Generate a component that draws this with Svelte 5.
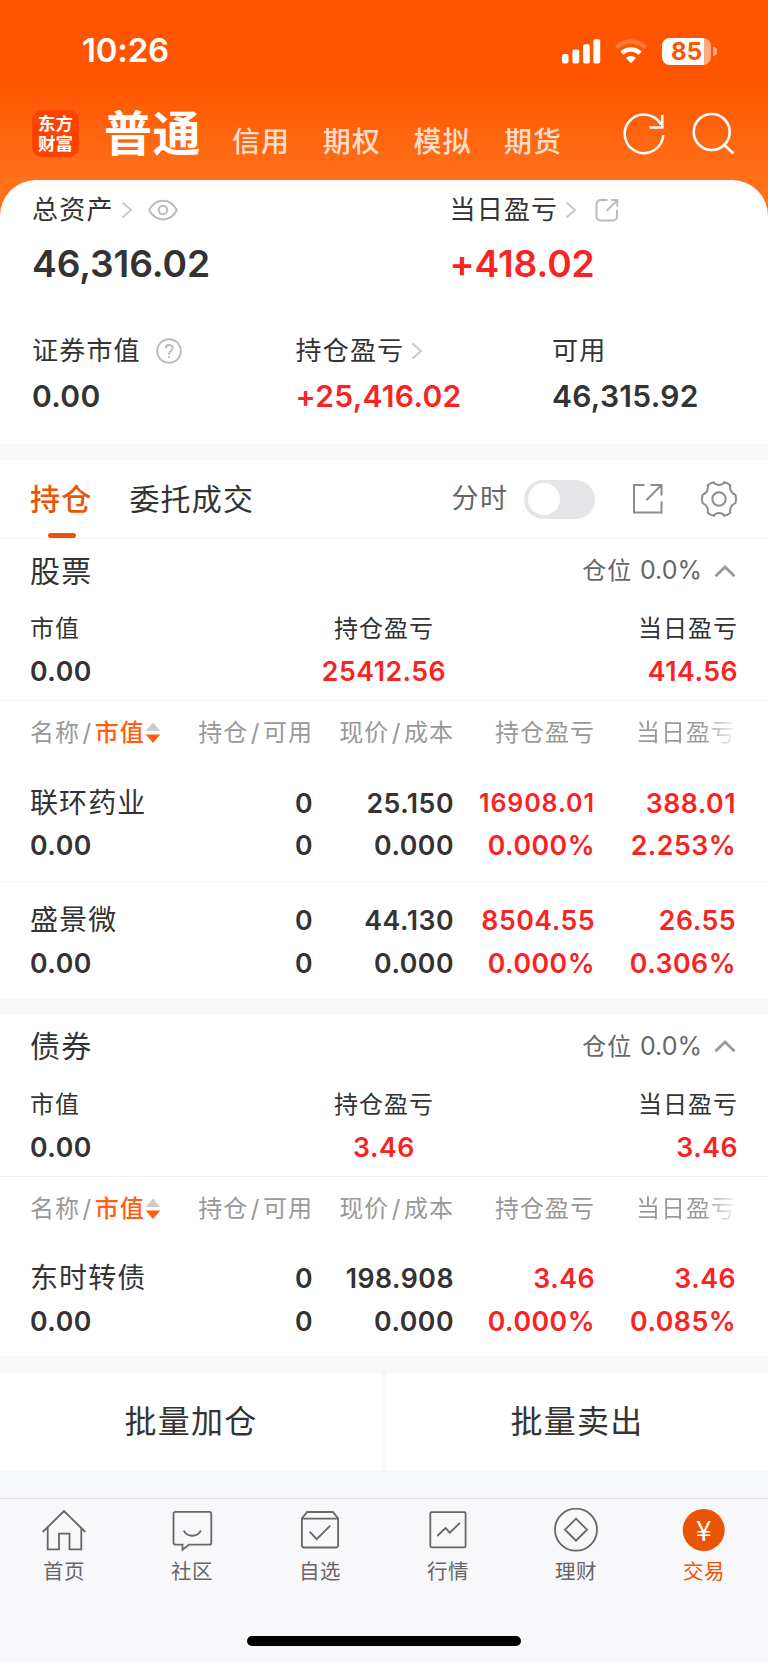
<script lang="ts">
	type Row = { name: string; value: string; cols: [string, string][] };
	type Section = { title: string; ratio: string; total: string; profit: string; today: string; rows: Row[] };

	const accounts = ['信用', '期权', '模拟', '期货'];

	const sections: Section[] = [
		{
			title: '股票',
			ratio: '0.0%',
			total: '0.00',
			profit: '25412.56',
			today: '414.56',
			rows: [
				{
					name: '联环药业',
					value: '0.00',
					cols: [['0', '0'], ['25.150', '0.000'], ['16908.01', '0.000%'], ['388.01', '2.253%']]
				},
				{
					name: '盛景微',
					value: '0.00',
					cols: [['0', '0'], ['44.130', '0.000'], ['8504.55', '0.000%'], ['26.55', '0.306%']]
				}
			]
		},
		{
			title: '债券',
			ratio: '0.0%',
			total: '0.00',
			profit: '3.46',
			today: '3.46',
			rows: [
				{
					name: '东时转债',
					value: '0.00',
					cols: [['0', '0'], ['198.908', '0.000'], ['3.46', '0.000%'], ['3.46', '0.085%']]
				}
			]
		}
	];

	const nav = [
		{ id: 'home', label: '首页' },
		{ id: 'social', label: '社区' },
		{ id: 'watch', label: '自选' },
		{ id: 'market', label: '行情' },
		{ id: 'wealth', label: '理财' },
		{ id: 'trade', label: '交易' }
	];

	let active = $state('trade');
	let intraday = $state(false);
</script>

{#snippet chevron()}
	<svg class="chevron" width="12" height="18" viewBox="0 0 12 18"><path d="M1.5 1.5 10 9l-8.500 7.500" /></svg>
{/snippet}

<div class="app">
	<header>
		<div class="status">
			<span class="time">10:26</span>
			<div class="indicators">
				<svg width="39" height="25" viewBox="0 0 39 25" fill="#fff">
					<rect x="0" y="15" width="6.500" height="9.500" rx="2" />
					<rect x="10.400" y="10.500" width="6.800" height="14" rx="2" />
					<rect x="21" y="5.300" width="6.800" height="19.200" rx="2" />
					<rect x="31.300" y="0.300" width="6.900" height="24.200" rx="2" />
				</svg>
				<svg class="wifi" width="34" height="25" viewBox="0 0 34 25" fill="none" stroke="#fff">
					<path d="M2.500 8.500a20.500 20.500 0 0 1 29 0" stroke-width="4.400" opacity="0.220" />
					<path d="M7.800 14.300a13 13 0 0 1 18.400 0" stroke-width="4.400" />
					<path d="M17 24.200l-5-5.200a7.200 7.200 0 0 1 10 0z" fill="#fff" stroke="none" />
				</svg>
				<div class="battery">85</div>
				<svg class="nub" width="4" height="9" viewBox="0 0 4 9"><path d="M0 0a4.500 4.500 0 0 1 0 9z" fill="#fff" opacity="0.500" /></svg>
			</div>
		</div>
		<div class="accounts">
			<div class="logo"><span>东方</span><span>财富</span></div>
			<h1>普通</h1>
			{#each accounts as account}
				<button class="account">{account}</button>
			{/each}
			<svg class="refresh" width="44" height="44" viewBox="0 0 44 44" fill="none" stroke="#fff" stroke-width="2.500">
				<path d="M41.300 23A19.300 19.300 0 1 1 39 12.600" />
				<path d="M40.300 3v12.600H27.500" />
			</svg>
			<svg width="44" height="44" viewBox="0 0 44 44" fill="none" stroke="#fff" stroke-width="2.600">
				<circle cx="20.700" cy="20" r="18" />
				<path d="M33 32.500l9.300 9" />
			</svg>
		</div>
	</header>

	<section class="summary">
		<div class="wide">
			<div class="stat">
				<div class="label">
					总资产{@render chevron()}
					<svg class="eye" width="30" height="22" viewBox="0 0 30 22">
						<path d="M1.200 11C7.500-1.500 22.500-1.500 28.800 11 22.500 23.500 7.500 23.500 1.200 11z" />
						<circle cx="15" cy="11" r="4.200" />
					</svg>
				</div>
				<strong>46,316.02</strong>
			</div>
			<div class="stat">
				<div class="label">
					当日盈亏{@render chevron()}
					<svg class="export" width="24" height="24" viewBox="0 0 24 24">
						<path d="M12.500 2H5.500a4 4 0 0 0-4 4v12.500a4 4 0 0 0 4 4H18a4 4 0 0 0 4-4V12M11.500 13 22 2.500M16 2h6.300v6.500" />
					</svg>
				</div>
				<strong class="up">+418.02</strong>
			</div>
		</div>
		<div class="narrow">
			<div class="stat">
				<div class="label">
					证券市值
					<svg class="help" width="26" height="26" viewBox="0 0 26 26">
						<circle cx="13" cy="13" r="11.800" />
						<path d="M9.700 10.500c0-4.800 6.900-4.600 6.900-.5 0 2.800-3.500 3-3.500 5.700v1M13.100 18.200v1.900" />
					</svg>
				</div>
				<strong>0.00</strong>
			</div>
			<div class="stat">
				<div class="label">持仓盈亏{@render chevron()}</div>
				<strong class="up">+25,416.02</strong>
			</div>
			<div class="stat">
				<div class="label">可用</div>
				<strong>46,315.92</strong>
			</div>
		</div>
	</section>

	<div class="tabs">
		<button class="tab selected">持仓</button>
		<button class="tab">委托成交</button>
		<span class="mode">分时</span>
		<button class="toggle" class:on={intraday} aria-label="分时" onclick={() => (intraday = !intraday)}></button>
		<svg class="tool" width="32" height="32" viewBox="0 0 32 32">
			<path d="M12.500 2H2v27.500h27.500V18.500M18.500 2h11v10.500M29.500 2 14.500 17" />
		</svg>
		<svg class="tool gear" width="38" height="38" viewBox="0 0 38 38">
			<path d="M13.700 2.200Q15.500 4.900 19 4.900T24.300 2.200Q27.800 3 30.300 5.200Q29.800 8 30.700 10.500Q32 13.600 35.400 14.900Q36.600 19 35.400 23.100Q32 24.400 30.700 27.500Q29.800 30 30.300 32.800Q27.800 35 24.300 35.800Q22.500 33.100 19 33.100T13.700 35.800Q10.200 35 7.700 32.800Q8.200 30 7.300 27.500Q6 24.400 2.600 23.100Q1.400 19 2.600 14.900Q6 13.600 7.300 10.500Q8.200 8 7.700 5.200Q10.200 3 13.700 2.200z" />
			<circle cx="19" cy="19" r="6.700" />
		</svg>
	</div>

	{#each sections as section}
		<section class="holding">
			<div class="title">
				<h2>{section.title}</h2>
				<span class="ratio">仓位 <em>{section.ratio}</em></span>
				<svg width="22" height="14" viewBox="0 0 22 14"><path d="M1.500 12.300 11 3l9.500 9.300" /></svg>
			</div>
			<div class="totals">
				<div><span>市值</span><b>{section.total}</b></div>
				<div><span>持仓盈亏</span><b class="up">{section.profit}</b></div>
				<div><span>当日盈亏</span><b class="up">{section.today}</b></div>
			</div>
			<div class="grid head">
				<span class="sort">
					名称<i>/</i><b>市值</b>
					<svg width="16" height="22" viewBox="0 0 16 22">
						<path d="M8 .5 15.300 9H.7z" fill="#ccc" />
						<path d="M8 21 15.300 12.500H.7z" fill="#ff5f0f" />
					</svg>
				</span>
				<span>持仓<i>/</i>可用</span>
				<span>现价<i>/</i>成本</span>
				<span>持仓盈亏</span>
				<span class="fade">当日盈亏</span>
			</div>
			{#each section.rows as row}
				<div class="grid row">
					<div><span class="name">{row.name}</span><span>{row.value}</span></div>
					{#each row.cols as [top, bottom], i}
						<div class:up={i > 1}>
							<span class:long={top.length > 7}>{top}</span>
							<span>{bottom}</span>
						</div>
					{/each}
				</div>
			{/each}
		</section>
	{/each}

	<div class="batch">
		<button>批量加仓</button>
		<button>批量卖出</button>
	</div>

	<nav>
		{#each nav as item}
			<button class:active={active === item.id} onclick={() => (active = item.id)}>
				<svg width="44" height="44" viewBox="0 0 44 44">
					{#if item.id === 'home'}
						<path d="M.7 24 22 3l21.300 21M5.700 19.500v21.900H17V25.700h10.500v15.700h11.800V19.500" />
					{:else if item.id === 'social'}
						<path d="M5.500 3.900h33.800a2 2 0 0 1 2 2v28.800a2 2 0 0 1-2 2H19l-6.500 5v-5h-7a2 2 0 0 1-2-2V5.900a2 2 0 0 1 2-2z" />
						<path d="M13.700 22.700c3.500 6.700 13.700 6.700 17.200 0" />
					{:else if item.id === 'watch'}
						<path d="M9.200 4h25.600l5.300 6.300v27a2.200 2.200 0 0 1-2.200 2.200H6.100a2.200 2.200 0 0 1-2.200-2.200v-27zM4 10.600h36" />
						<path d="m11.700 23.700 7 7.500L32.200 17.700" />
					{:else if item.id === 'market'}
						<rect x="4.300" y="4.100" width="35.300" height="35.300" rx="1.500" />
						<path d="m11.300 28 8.200-8 4.300 4.700 10-9.700" />
					{:else if item.id === 'wealth'}
						<circle cx="22" cy="21.700" r="21" />
						<path d="m22 10.700 11 11-11 11-11-11z" />
					{:else}
						<circle class="disc" cx="21.700" cy="22" r="21" />
						<text x="21.700" y="32.500">¥</text>
					{/if}
				</svg>
				{item.label}
			</button>
		{/each}
		<div class="indicator"></div>
	</nav>
</div>

<style>
	:global(body) {
		margin: 0;
		background: #f7f8fa;
	}
	.app {
		width: 768px;
		height: 1663px;
		overflow: hidden;
		display: flex;
		flex-direction: column;
		font-family: Inter, 'Noto Sans CJK SC', sans-serif;
		line-height: 1.2;
		color: #333;
		white-space: nowrap;
	}
	button {
		border: 0;
		padding: 0;
		background: none;
		font: inherit;
		color: inherit;
	}
	svg {
		display: block;
		flex: none;
	}
	h1,
	h2 {
		margin: 0;
	}
	.up {
		color: #fa2323;
	}

	header {
		box-sizing: border-box;
		height: 219px;
		flex: none;
		background: linear-gradient(#ff5500 80px, #ff7019 175px);
		color: #fff;
	}
	.status {
		height: 102px;
		box-sizing: border-box;
		padding: 0 51px 0 82px;
		display: flex;
		align-items: center;
		justify-content: space-between;
	}
	.time {
		font-size: 33px;
		font-weight: 600;
		letter-spacing: -0.2px;
	}
	.indicators {
		display: flex;
		align-items: center;
	}
	.wifi {
		margin: 0 14px 0 13px;
	}
	.battery {
		width: 49px;
		height: 27px;
		border-radius: 8px;
		background: linear-gradient(90deg, #fff 42px, rgba(255, 255, 255, 0.5) 42px);
		color: #ff5500;
		font-size: 24px;
		font-weight: 700;
		line-height: 27px;
		text-align: center;
	}
	.nub {
		margin-left: 2px;
	}
	.accounts {
		display: flex;
		align-items: center;
		height: 63px;
		padding-left: 32px;
	}
	.logo {
		width: 47px;
		height: 47px;
		border-radius: 10px;
		background: #ff4200;
		display: flex;
		flex-direction: column;
		align-items: center;
		justify-content: center;
		font-size: 17.500px;
		font-weight: 700;
		line-height: 20px;
	}
	h1 {
		margin: 0 2px 0 25px;
		font-size: 48px;
		font-weight: 700;
		line-height: 60px;
		letter-spacing: 0.5px;
	}
	.account {
		width: 58px;
		margin: 17px 3.700px 0 29px;
		font-size: 28px;
		font-weight: 500;
		line-height: 32px;
		letter-spacing: 1px;
		color: rgba(255, 255, 255, 0.8);
	}
	.refresh {
		margin: 0 25px 0 56.500px;
	}

	.summary {
		position: relative;
		flex: none;
		box-sizing: border-box;
		height: 264px;
		margin-top: -39px;
		border-radius: 36px 36px 0 0;
		background: #fff;
	}
	.wide,
	.narrow {
		display: grid;
		padding-left: 32px;
	}
	.wide {
		grid-template-columns: 417.500px 1fr;
		padding-top: 10px;
	}
	.narrow {
		grid-template-columns: 263.500px 256.500px 1fr;
		padding-top: 33px;
	}
	.label {
		display: flex;
		align-items: center;
		height: 40px;
		font-size: 26px;
		letter-spacing: 1.200px;
	}
	.wide strong {
		display: block;
		line-height: 68px;
		font-size: 37.200px;
		font-weight: 600;
		letter-spacing: -0.100px;
	}
	.narrow strong {
		display: block;
		line-height: 50px;
		font-size: 30px;
		font-weight: 600;
		letter-spacing: 0.300px;
	}
	.label svg {
		fill: none;
		stroke: #bbb;
		stroke-width: 2;
	}
	.label .chevron {
		margin-left: 7px;
		stroke: #c8c8c8;
	}
	.eye {
		margin-left: 15px;
	}
	.export {
		margin-left: 18px;
	}
	.help {
		margin-left: 15.500px;
	}

	.tabs {
		flex: none;
		box-sizing: border-box;
		height: 79px;
		margin-top: 16px;
		padding-left: 30px;
		display: flex;
		align-items: center;
		background: #fff;
		border-bottom: 1px solid #f0f0f2;
	}
	.tab {
		position: relative;
		height: 78px;
		margin-right: 37px;
		font-size: 30px;
		letter-spacing: 1.200px;
	}
	.selected {
		color: #ea5504;
		font-weight: 500;
	}
	.selected::after {
		content: '';
		position: absolute;
		left: 17.500px;
		bottom: 0;
		width: 28px;
		height: 5.500px;
		border-radius: 3px;
		background: #ea5504;
	}
	.mode {
		margin-left: auto;
		font-size: 27px;
		letter-spacing: 1.500px;
		color: #666;
	}
	.toggle {
		width: 71px;
		height: 39px;
		margin-left: 15px;
		padding: 3px 4px;
		border-radius: 20px;
		background: #e5e5e7;
		display: flex;
	}
	.toggle.on {
		justify-content: flex-end;
		background: #ea5504;
	}
	.toggle::after {
		content: '';
		width: 32px;
		height: 32px;
		border-radius: 50%;
		background: #fff;
	}
	.tool {
		margin-left: 37.500px;
		fill: none;
		stroke: #8c8c8c;
		stroke-width: 2;
	}
	.gear {
		margin: 0 30px 0 36px;
	}

	.holding {
		flex: none;
		margin-bottom: 16.500px;
		background: #fff;
	}
	.title {
		height: 63px;
		padding: 0 32px 0 30px;
		display: flex;
		align-items: center;
	}
	h2 {
		flex: 1;
		font-size: 30px;
		font-weight: 400;
		letter-spacing: 1.200px;
	}
	.ratio {
		font-size: 24px;
		letter-spacing: 1px;
		color: #666;
	}
	.ratio em {
		font-style: normal;
		font-size: 25px;
		letter-spacing: 0;
	}
	.title svg {
		margin-left: 12px;
		fill: none;
		stroke: #999;
		stroke-width: 2.800;
	}
	.totals {
		box-sizing: border-box;
		height: 99px;
		padding: 6px 30px 0;
		display: grid;
		grid-template-columns: 1fr 1fr 1fr;
		border-bottom: 1px solid #f0f0f2;
	}
	.totals div {
		display: flex;
		flex-direction: column;
		align-items: center;
		line-height: 42px;
	}
	.totals div:first-child {
		align-items: flex-start;
	}
	.totals div:last-child {
		align-items: flex-end;
	}
	.totals span {
		font-size: 24px;
		letter-spacing: 1px;
	}
	.totals b {
		font-size: 26.700px;
		font-weight: 600;
		letter-spacing: 0.500px;
	}
	.grid {
		display: grid;
		grid-template-columns: 142px 141px 141px 141px 141px;
		padding-left: 30px;
		text-align: right;
	}
	.head {
		height: 62px;
		line-height: 64px;
		font-size: 24px;
		letter-spacing: 1px;
		color: #999;
	}
	.head i {
		margin: 0 2.500px;
		font-style: normal;
	}
	.sort {
		display: flex;
		align-items: center;
	}
	.sort b {
		font-weight: 500;
		color: #ff5f0f;
	}
	.fade {
		background: linear-gradient(90deg, #999 108px, rgba(153, 153, 153, 0.1) 141px);
		background-clip: text;
		color: transparent;
	}
	.row {
		box-sizing: border-box;
		height: 117.500px;
		padding-top: 18.500px;
		font-size: 26.700px;
		font-weight: 600;
		line-height: 42.500px;
		letter-spacing: 0.500px;
	}
	.row + .row {
		padding-top: 17.500px;
		border-top: 1px solid #f4f4f6;
	}
	.row span {
		display: block;
	}
	.row div:first-child {
		text-align: left;
	}
	.row .name {
		font-size: 28px;
		font-weight: 400;
		letter-spacing: 1.100px;
	}
	.row .long {
		font-size: 25px;
		letter-spacing: 0.900px;
	}

	.batch {
		flex: none;
		display: flex;
		gap: 4px;
		height: 98.500px;
	}
	.batch button {
		flex: 1;
		background: #fff;
		font-size: 32px;
		letter-spacing: 1.200px;
	}

	nav {
		flex: 1;
		margin-top: 27px;
		display: grid;
		grid-template-columns: repeat(6, 1fr);
		grid-template-rows: 137px auto;
		border-top: 1px solid #dfe1e5;
		background: #f8f8fb;
	}
	nav button {
		display: flex;
		flex-direction: column;
		align-items: center;
		padding-top: 9px;
		font-size: 20.500px;
		line-height: 40px;
		letter-spacing: 0.600px;
		color: #666;
	}
	nav svg {
		fill: none;
		stroke: #666;
		stroke-width: 1.800;
	}
	nav .active {
		color: #ea5504;
	}
	.disc {
		fill: #ea5504;
		stroke: none;
	}
	nav text {
		fill: #fff;
		stroke: none;
		font-family: 'Noto Sans CJK SC', sans-serif;
		font-size: 28px;
		letter-spacing: 0;
		text-anchor: middle;
	}
	.indicator {
		grid-column: 1 / -1;
		justify-self: center;
		width: 274px;
		height: 10px;
		border-radius: 5px;
		background: #000;
	}
</style>
